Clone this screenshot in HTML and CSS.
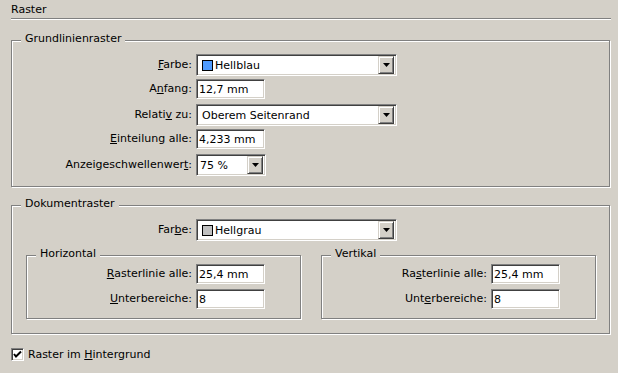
FILE: index.html
```html
<!DOCTYPE html>
<html lang="de">
<head>
  <meta charset="UTF-8">
  <title>Raster</title>
  <link rel="stylesheet" href="styles.css">
</head>
<body>
  <div class="head">Raster</div>
  <div class="rule"></div>

  <!-- Grundlinienraster -->
  <div class="group first">
    <span class="legend">Grundlinienraster</span>
    <div class="form">
      <span class="lbl"><u>F</u>arbe:</span>
      <div class="select wide"><span class="swatch blue"></span><span class="val">Hellblau</span><span class="btn"><svg width="7" height="4"><polygon points="0,0 7,0 3.5,4" fill="#000"/></svg></span></div>

      <span class="lbl in">A<u>n</u>fang:</span>
      <div class="field">12,7 mm</div>

      <span class="lbl">Relati<u>v</u> zu:</span>
      <div class="select wide"><span class="val pad">Oberem Seitenrand</span><span class="btn"><svg width="7" height="4"><polygon points="0,0 7,0 3.5,4" fill="#000"/></svg></span></div>

      <span class="lbl in"><u>E</u>inteilung alle:</span>
      <div class="field">4,233 mm</div>

      <span class="lbl">Anzeigeschwellenwer<u>t</u>:</span>
      <div class="select small"><span class="val">75 %</span><span class="btn"><svg width="7" height="4"><polygon points="0,0 7,0 3.5,4" fill="#000"/></svg></span></div>
    </div>
  </div>

  <!-- Dokumentraster -->
  <div class="group second">
    <span class="legend">Dokumentraster</span>
    <div class="form">
      <span class="lbl">Far<u>b</u>e:</span>
      <div class="select wide"><span class="swatch grey"></span><span class="val">Hellgrau</span><span class="btn"><svg width="7" height="4"><polygon points="0,0 7,0 3.5,4" fill="#000"/></svg></span></div>
    </div>

    <div class="subs">
      <div class="group sub">
        <span class="legend">Horizontal</span>
        <div class="form inner">
          <span class="lbl in"><u>R</u>asterlinie alle:</span>
          <div class="field">25,4 mm</div>
          <span class="lbl in"><u>U</u>nterbereiche:</span>
          <div class="field">8</div>
        </div>
      </div>
      <div class="group sub">
        <span class="legend">Vertikal</span>
        <div class="form inner">
          <span class="lbl in">Ra<u>s</u>terlinie alle:</span>
          <div class="field">25,4 mm</div>
          <span class="lbl in">Unt<u>e</u>rbereiche:</span>
          <div class="field">8</div>
        </div>
      </div>
    </div>
  </div>

  <div class="check">
    <span class="box"><svg width="9" height="9"><polyline points="1,4 3,6.5 8,1.5" fill="none" stroke="#000" stroke-width="2"/></svg></span>
    <span>Raster im <u>H</u>intergrund</span>
  </div>
</body>
</html>
```

FILE: styles.css
```css
/* Grundstil */
body{
  margin:0;
  background:#d4d0c8;
  font-family:Tahoma,"DejaVu Sans",sans-serif;
  font-size:11px;
  line-height:13px;
  color:#000;
}
u{
  text-decoration:underline;
  text-underline-offset:1px;
}
.head{
  padding:3px 0 0 11px;
}
.rule{
  margin:2px 7px 0 11px;
  height:1px;
  background:#808080;
  box-shadow:0 1px 0 #fff;
}

/* Gruppenrahmen */
.group{
  position:relative;
  border:1px solid #808080;
  box-shadow:inset 1px 1px 0 #fff,1px 1px 0 #fff;
}
.group.first,
.group.second{
  margin:0 8px 0 11px;
}
.group.first{
  margin-top:21px;
  padding:13px 0 7px;
}
.group.second{
  margin-top:18px;
  padding:13px 13px 14px 14px;
}
.legend{
  position:absolute;
  top:-9px;
  left:9px;
  padding:0 4px;
  background:#d4d0c8;
}

/* Formularzeilen */
.form{
  display:grid;
  grid-template-columns:180px auto;
  grid-auto-rows:25px;
  column-gap:4px;
  align-items:start;
  justify-items:start;
}
.second > .form{
  margin-left:-14px;
}
.form.inner{
  grid-template-columns:165px auto;
}
.lbl{
  justify-self:end;
  line-height:22px;
  white-space:nowrap;
}
.lbl.in{
  line-height:20px;
}

.field,
.select{
  box-sizing:border-box;
  background:#fff;
  border:1px solid;
  border-color:#808080 #fff #fff #808080;
  box-shadow:inset 1px 1px 0 #404040,inset -1px -1px 0 #d4d0c8;
}
.field{
  width:69px;
  height:20px;
  padding:3px 2px 0 2px;
  white-space:nowrap;
}
.select{
  display:flex;
  align-items:center;
  height:22px;
  padding:2px;
}
.select.wide{
  width:201px;
}
.select.small{
  width:70px;
}
.val{
  flex:1;
  padding-left:1px;
  white-space:nowrap;
}
.val.pad{
  padding-left:3px;
}
.swatch{
  width:9px;
  height:9px;
  margin:0 1px 0 3px;
  border:1px solid #000;
}
.swatch.blue{
  background:#4f9bff;
}
.swatch.grey{
  background:#c0c0c0;
}
.btn{
  box-sizing:border-box;
  width:16px;
  height:18px;
  display:flex;
  align-items:center;
  justify-content:center;
  background:#d4d0c8;
  border:1px solid;
  border-color:#d4d0c8 #404040 #404040 #d4d0c8;
  box-shadow:inset 1px 1px 0 #fff,inset -1px -1px 0 #808080;
}
.btn svg{
  display:block;
}

/* Unterrahmen */
.subs{
  display:grid;
  grid-template-columns:1fr 1fr;
  column-gap:20px;
  margin-top:11px;
}
.group.sub{
  padding:8px 0 4px;
}

/* Kontrollkästchen */
.check{
  display:flex;
  align-items:center;
  gap:4px;
  margin:14px 0 0 11px;
}
.box{
  box-sizing:border-box;
  width:13px;
  height:13px;
  display:flex;
  align-items:center;
  justify-content:center;
  background:#fff;
  border:1px solid;
  border-color:#808080 #fff #fff #808080;
  box-shadow:inset 1px 1px 0 #404040,inset -1px -1px 0 #d4d0c8;
}
.box svg{
  display:block;
}
```
